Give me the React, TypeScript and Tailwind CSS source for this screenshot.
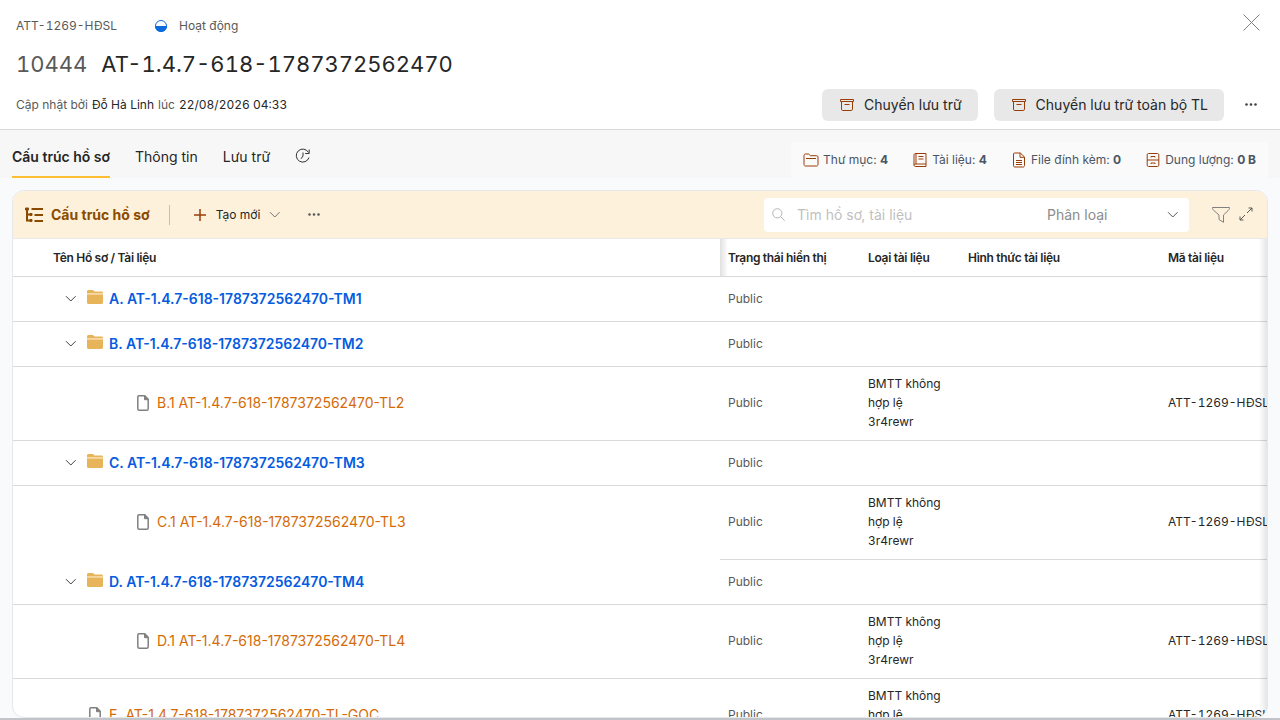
import React from 'react';

interface IconProps {
  className?: string;
}

interface Row {
  label: string;
  kind: 'folder' | 'file';
  level: number;
  type?: string[];
  code?: string;
  divider?: boolean;
}

const FILE_TYPE = ['BMTT không', 'hợp lệ', '3r4rewr'];
const CODE = 'ATT-1269-HĐSL';

const rows: Row[] = [
  { label: 'A. AT-1.4.7-618-1787372562470-TM1', kind: 'folder', level: 1 },
  { label: 'B. AT-1.4.7-618-1787372562470-TM2', kind: 'folder', level: 1 },
  { label: 'B.1 AT-1.4.7-618-1787372562470-TL2', kind: 'file', level: 2, type: FILE_TYPE, code: CODE },
  { label: 'C. AT-1.4.7-618-1787372562470-TM3', kind: 'folder', level: 1 },
  { label: 'C.1 AT-1.4.7-618-1787372562470-TL3', kind: 'file', level: 2, type: FILE_TYPE, code: CODE, divider: false },
  { label: 'D. AT-1.4.7-618-1787372562470-TM4', kind: 'folder', level: 1 },
  { label: 'D.1 AT-1.4.7-618-1787372562470-TL4', kind: 'file', level: 2, type: FILE_TYPE, code: CODE },
  { label: 'E. AT-1.4.7-618-1787372562470-TL-GOC', kind: 'file', level: 1, type: FILE_TYPE, code: CODE },
];

function ArchiveIcon({ className }: IconProps) {
  return (
    <svg className={className} width="16" height="16" viewBox="0 0 16 16" fill="none" stroke="currentColor">
      <path d="M1.500 2.500h13v2h-13zM2.500 4.500v7.700c0 .8.500 1.300 1.300 1.300h8.400c.8 0 1.300-.5 1.300-1.300V4.500M5.500 7.500h5" />
    </svg>
  );
}

function ChevronDown({ className }: IconProps) {
  return (
    <svg className={className} width="12" height="12" viewBox="0 0 12 12" fill="none" stroke="currentColor">
      <path d="m1 3.200 4.800 4.800 4.800-4.800" />
    </svg>
  );
}

function MoreIcon({ className }: IconProps) {
  return (
    <svg className={className} width="12" height="12" viewBox="0 0 12 12" fill="currentColor">
      <circle cx="1.500" cy="5.500" r="1.300" />
      <circle cx="6" cy="5.500" r="1.300" />
      <circle cx="10.500" cy="5.500" r="1.300" />
    </svg>
  );
}

function StatusIcon() {
  return (
    <svg width="14" height="14" viewBox="0 0 14 14">
      <circle cx="7" cy="7" r="5.500" fill="#fff" stroke="#0b6bde" />
      <path d="M1 7a6 6 0 0 0 12 0z" fill="#0b6bde" />
    </svg>
  );
}

function HistoryIcon() {
  return (
    <svg width="16" height="16" viewBox="0 0 16 16" fill="none" stroke="#333">
      <path d="M13.500 4.500A6.500 6.500 0 1 0 14 9.500M14.200 1.500v4h-4M8 4.500V8L6 10.800" />
    </svg>
  );
}

function TreeIcon() {
  return (
    <svg width="20" height="16" viewBox="0 0 20 16" fill="none" stroke="#8a4b00" strokeWidth="2">
      <path d="M2 1v12.500h4M2 7.500h4M6.500 2H18M9.500 8H18M9.500 14H18" />
      <path d="M.5 1h3v2h-3zM5 6.500h2v2H5zM5 12.500h2v2H5z" strokeWidth="1" fill="#8a4b00" />
    </svg>
  );
}

function FolderIcon() {
  return (
    <svg width="16" height="16" viewBox="0 0 16 16">
      <path d="M0 2.500C0 1.600.6 1 1.500 1H6l1.500 1.500h7c.9 0 1.500.6 1.500 1.500v1H0z" fill="#e8b45a" />
      <path d="M0 4.200h16v1.400H0z" fill="#f9e3b6" />
      <path d="M0 5.500h16v8c0 .9-.6 1.500-1.500 1.500h-13C.6 15 0 14.400 0 13.500z" fill="#e8b45a" />
    </svg>
  );
}

function FileIcon() {
  return (
    <svg width="12" height="16" viewBox="0 0 12 16" fill="none" stroke="#808080" strokeWidth="1.500">
      <path d="M2 .8h5.800l3.400 3.600v9.300c0 .9-.6 1.500-1.500 1.500H2.300c-.9 0-1.500-.6-1.500-1.500V2c0-.7.500-1.200 1.200-1.200z" />
      <path d="M7.500 1v3.700h3.700z" fill="#808080" strokeWidth="1" />
    </svg>
  );
}

const statIcons = {
  folder: <path d="M1 12.500v-9C1 2.700 1.500 2 2.300 2h3.200l2 1.700h6.200c.8 0 1.300.5 1.300 1.300v7.500c0 .8-.5 1.500-1.300 1.500H2.300C1.500 14 1 13.300 1 12.500zM3 6.500h10" />,
  book: <path d="M4 12V1.500h10V12H4zM4 1.500c-1.500 0-2 .6-2 1.500v10c0 1 .7 1.500 2 1.500h10V12M4 12c-1.300 0-2 .4-2 1.200M6.500 4.500h5M6.500 7h5" />,
  file: <path d="M3.500 1h5.800L13.500 5v8.500c0 .8-.5 1.500-1.300 1.500H3.800c-.8 0-1.300-.5-1.300-1.300V2c0-.6.4-1 1-1zM9 1v4.300h4.500M5 8.500h6M5 10.500h6M5 12.500h6" />,
  drawer: <path d="M3.500 1.500h9c.8 0 1.300.5 1.300 1.300v10.400c0 .8-.5 1.300-1.300 1.300h-9c-.8 0-1.300-.5-1.300-1.300V2.800c0-.8.5-1.300 1.300-1.300zM2 8h12M6 5.500V4.500h4v1M6 12v-1h4v1" />,
};

const stats: { icon: keyof typeof statIcons; label: string; value: string }[] = [
  { icon: 'folder', label: 'Thư mục:', value: '4' },
  { icon: 'book', label: 'Tài liệu:', value: '4' },
  { icon: 'file', label: 'File đính kèm:', value: '0' },
  { icon: 'drawer', label: 'Dung lượng:', value: '0 B' },
];

function PageHeader() {
  return (
    <header className="relative h-[130px] shrink-0 border-b border-[#d9d9d9] bg-white px-4 pt-4">
      <div className="flex h-5 items-center text-xs text-[#595959]">
        <span className="tabular-nums">{CODE}</span>
        <span className="ml-[37px] flex items-center gap-[11px]">
          <StatusIcon />
          Hoạt động
        </span>
      </div>
      <h1 className="mt-3 flex h-8 items-center gap-[14px] text-[22px] tabular-nums text-[#262626]">
        <span className="text-[#595959]">10444</span>
        <span>AT-1.4.7-618-1787372562470</span>
      </h1>
      <div className="mt-[9px] flex h-8 items-center justify-between">
        <p className="flex gap-1 text-xs text-[#595959]">
          Cập nhật bởi <span className="text-[#262626]">Đỗ Hà Linh</span> lúc{' '}
          <span className="tabular-nums text-[#262626]">22/08/2026 04:33</span>
        </p>
        <div className="flex items-center gap-4 text-sm text-[#262626]">
          <button className="flex h-8 items-center gap-[9px] rounded-md bg-[#e8e8e8] pl-[17px] pr-4">
            <ArchiveIcon className="text-[#993d07]" />
            Chuyển lưu trữ
          </button>
          <button className="flex h-8 items-center gap-[9px] rounded-md bg-[#e8e8e8] pl-[17px] pr-4">
            <ArchiveIcon className="text-[#993d07]" />
            Chuyển lưu trữ toàn bộ TL
          </button>
          <button aria-label="Thêm" className="ml-[5px] mr-[7px] text-[#404040]">
            <MoreIcon />
          </button>
        </div>
      </div>
      <button aria-label="Đóng" className="absolute right-5 top-[14px] text-[#808080]">
        <svg width="17" height="17" viewBox="0 0 17 17" stroke="currentColor" fill="none">
          <path d="m.5.5 16 16M16.500.5l-16 16" />
        </svg>
      </button>
    </header>
  );
}

function TabBar() {
  return (
    <div className="flex h-12 shrink-0 items-end justify-between bg-[#f7f7f7] px-3">
      <nav className="flex items-center gap-[25px] text-sm text-[#262626]">
        <a href="#cau-truc" className="flex h-10 items-center border-b-2 border-[#ffbf33] font-semibold">
          Cấu trúc hồ sơ
        </a>
        <a href="#thong-tin" className="flex h-10 items-center border-b-2 border-transparent">Thông tin</a>
        <a href="#luu-tru" className="flex h-10 items-center border-b-2 border-transparent">Lưu trữ</a>
        <button aria-label="Lịch sử" className="pb-1">
          <HistoryIcon />
        </button>
      </nav>
      <div className="flex h-9 items-center gap-6 rounded bg-[#fafafa] px-3 text-xs text-[#4b5563]">
        {stats.map((s) => (
          <span key={s.label} className="flex items-center gap-1">
            <svg width="16" height="16" viewBox="0 0 16 16" fill="none" stroke="#993d07">
              {statIcons[s.icon]}
            </svg>
            <span>
              {s.label} <b className="font-bold">{s.value}</b>
            </span>
          </span>
        ))}
      </div>
    </div>
  );
}

function Toolbar() {
  return (
    <div className="flex h-12 shrink-0 items-center border-b border-[#e8e8e8] bg-[#fdf1db] px-3">
      <TreeIcon />
      <h2 className="ml-[6px] text-sm font-bold text-[#8a4b00]">Cấu trúc hồ sơ</h2>
      <span className="ml-[19px] mr-6 h-5 w-px bg-[#bfbfbf]" />
      <button className="flex items-center text-xs text-[#262626]">
        <svg width="12" height="12" viewBox="0 0 12 12" stroke="#993d07" strokeWidth="1.500">
          <path d="M6 0v12M0 6h12" />
        </svg>
        <span className="ml-[10px] mr-[9px]">Tạo mới</span>
        <ChevronDown className="text-[#737373]" />
      </button>
      <button aria-label="Tùy chọn khác" className="ml-[27px] text-[#595959]">
        <MoreIcon />
      </button>
      <div className="ml-auto flex h-[34px] w-[425px] items-center rounded-sm bg-white text-sm">
        <svg className="ml-2 shrink-0" width="13" height="13" viewBox="0 0 13 13" fill="none" stroke="#b5b5b5">
          <circle cx="5.300" cy="5.300" r="4.600" />
          <path d="m8.700 8.700 4 4" />
        </svg>
        <input
          aria-label="Tìm hồ sơ, tài liệu"
          placeholder="Tìm hồ sơ, tài liệu"
          className="ml-3 w-[250px] outline-none placeholder:text-[#bfbfbf]"
        />
        <div className="relative flex grow items-center text-[#8c8c8c]">
          <select aria-label="Phân loại" className="w-full appearance-none bg-transparent outline-none">
            <option>Phân loại</option>
          </select>
          <ChevronDown className="pointer-events-none absolute right-[10px] text-[#595959]" />
        </div>
      </div>
      <button aria-label="Bộ lọc" className="ml-[22px]">
        <svg width="20" height="18" viewBox="0 0 20 18" fill="none" stroke="#808080">
          <path d="M1.500 1.500h17c0 1.500-.3 2-1.300 3L12.500 9v7.300L8 13.500V9L2.800 4.500c-1-1-1.300-1.500-1.300-3z" />
        </svg>
      </button>
      <button aria-label="Toàn màn hình" className="ml-2 mr-[2px] pb-[2px]">
        <svg width="14" height="14" viewBox="0 0 14 14" fill="none" stroke="#595959">
          <path d="M9.500 1H13v3.500M13 1 8 6M4.500 13H1V9.500M1 13l5-5" />
        </svg>
      </button>
    </div>
  );
}

function NameCell({ row }: { row: Row }) {
  return (
    <td className={row.divider === false ? 'px-2' : 'border-b border-[#d9d9d9] px-2'}>
      {row.kind === 'folder' ? (
        <div className="flex items-center pl-11">
          <button aria-label="Thu gọn" className="pb-px text-[#404040]">
            <ChevronDown />
          </button>
          <span className="ml-[10px] pb-[5px]">
            <FolderIcon />
          </span>
          <a href="#folder" className="ml-[6px] text-sm font-semibold text-[#055ce0]">{row.label}</a>
        </div>
      ) : (
        <div className={row.level === 2 ? 'flex items-center pl-[116px]' : 'flex items-center pl-[68px]'}>
          <FileIcon />
          <a href="#file" className="ml-2 text-sm text-[#d46b08]">{row.label}</a>
        </div>
      )}
    </td>
  );
}

function DocumentTable() {
  return (
    <div className="relative grow overflow-hidden">
      <table className="w-[1355px] table-fixed border-separate border-spacing-0 text-left text-xs text-[#262626]">
        <colgroup>
          <col className="w-[707px]" />
          <col className="w-[140px]" />
          <col className="w-[100px]" />
          <col className="w-[200px]" />
          <col />
        </colgroup>
        <thead>
          <tr className="h-[38px] tracking-tight *:border-b *:border-[#d9d9d9] *:px-2 *:font-semibold">
            <th className="relative">
              <span className="pl-8">Tên Hồ sơ / Tài liệu</span>
              <span className="absolute inset-y-0 left-full w-2 bg-linear-to-r from-black/12 to-transparent" />
            </th>
            <th>Trạng thái hiển thị</th>
            <th>Loại tài liệu</th>
            <th>Hình thức tài liệu</th>
            <th>Mã tài liệu</th>
          </tr>
        </thead>
        <tbody>
          {rows.map((row) => (
            <tr key={row.label} className={row.kind === 'folder' ? 'h-[45px]' : 'h-[74px] *:pb-[2px]'}>
              <NameCell row={row} />
              <td className="border-b border-[#d9d9d9] px-2 text-[#595959]">Public</td>
              <td className="border-b border-[#d9d9d9] px-2 leading-[19px] tabular-nums">
                {row.type?.map((line) => <div key={line} className="whitespace-nowrap">{line}</div>)}
              </td>
              <td className="border-b border-[#d9d9d9] px-2" />
              <td className="border-b border-[#d9d9d9] px-2 tabular-nums">{row.code}</td>
            </tr>
          ))}
        </tbody>
      </table>
      <div className="pointer-events-none absolute inset-y-0 right-0 w-2 bg-linear-to-l from-black/10 to-transparent" />
    </div>
  );
}

export default function App() {
  return (
    <div className="flex h-screen flex-col overflow-hidden bg-[#f8fafc] font-['Inter',sans-serif]">
      <PageHeader />
      <TabBar />
      <main className="mx-3 mt-3 flex min-h-0 grow flex-col overflow-hidden rounded-xl border border-[#e5e7eb] bg-white">
        <Toolbar />
        <DocumentTable />
      </main>
      <div className="h-[2px] shrink-0 bg-[#c1c5c9]" />
    </div>
  );
}
